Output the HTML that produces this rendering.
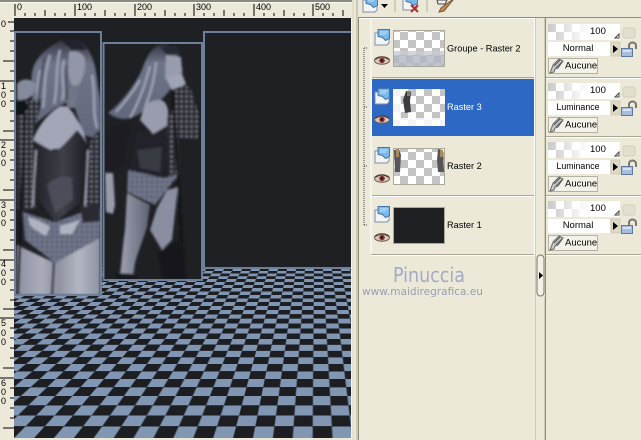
<!DOCTYPE html>
<html><head><meta charset="utf-8">
<style>
html,body{margin:0;padding:0;background:#ece9d8;}
#root{position:relative;width:641px;height:440px;overflow:hidden;background:#ece9d8;font-family:"Liberation Sans",sans-serif;}
#canvas{position:absolute;left:14px;top:18px;width:337px;height:419px;background:#1e2024;}
#floor{position:absolute;left:14px;top:268px;width:337px;height:170px;overflow:hidden;background:#1e2024;perspective:1000px;perspective-origin:301px -138px;}
#plane{position:absolute;left:-1199px;top:-1130px;width:3000px;height:1300px;transform-origin:50% 100%;transform:rotateX(90deg);
background-color:#1d1e22;
background-image:conic-gradient(#8096b3 25%,#1d1e22 25% 50%,#8096b3 50% 75%,#1d1e22 75%);
background-size:39.8px 79px;background-position:5.25px 100%;}
svg#ov{position:absolute;left:0;top:0;}
svg text{font-family:"Liberation Sans",sans-serif;fill:#000;}
</style></head><body><div id="root">
<div id="canvas"></div>
<div id="floor"><div id="plane"></div></div>
<svg id="ov" width="641" height="440" viewBox="0 0 641 440" xmlns="http://www.w3.org/2000/svg">
<defs>
<filter id="b1" x="-10%" y="-10%" width="120%" height="120%"><feGaussianBlur stdDeviation="1.1"/></filter>
<filter id="b3"><feGaussianBlur stdDeviation="0.35"/></filter>
<pattern id="ck" width="16" height="16" patternUnits="userSpaceOnUse"><rect width="16" height="16" fill="#fff"/><rect width="8" height="8" fill="#c3c3c3"/><rect x="8" y="8" width="8" height="8" fill="#c3c3c3"/></pattern>
<pattern id="ck2" width="14" height="14" patternUnits="userSpaceOnUse"><rect width="14" height="14" fill="#fff"/><rect width="7" height="7" fill="#c6c6c6"/><rect x="7" y="7" width="7" height="7" fill="#c6c6c6"/></pattern>
<pattern id="stud" width="5" height="5" patternUnits="userSpaceOnUse"><rect width="5" height="5" fill="#2a2c33"/><circle cx="1.500" cy="1.500" r="1" fill="#9498a8"/></pattern>
<pattern id="stud2" width="5" height="5" patternUnits="userSpaceOnUse"><rect width="5" height="5" fill="#6f7589"/><circle cx="2" cy="2" r="0.9" fill="#2a2c34"/></pattern>
<linearGradient id="fade" x1="0" x2="1"><stop offset="0" stop-color="#fff" stop-opacity="0"/><stop offset=".55" stop-color="#fff" stop-opacity=".85"/><stop offset=".75" stop-color="#fff"/></linearGradient>
<linearGradient id="hair" x1="0" y1="0" x2="0" y2="1"><stop offset="0" stop-color="#32353f"/><stop offset=".25" stop-color="#6f7489"/><stop offset="1" stop-color="#62677b"/></linearGradient>
<linearGradient id="thigh" x1="0" x2="1"><stop offset="0" stop-color="#8d90a0"/><stop offset=".3" stop-color="#a9acba"/><stop offset=".5" stop-color="#8f92a2"/><stop offset=".75" stop-color="#b3b6c3"/><stop offset="1" stop-color="#8f92a2"/></linearGradient>
<linearGradient id="leg2" x1="0" x2="1"><stop offset="0" stop-color="#9da1b1"/><stop offset="1" stop-color="#5d6272"/></linearGradient>
<linearGradient id="corset" x1="0" x2="1"><stop offset="0" stop-color="#1f2126"/><stop offset=".55" stop-color="#3e4049"/><stop offset="1" stop-color="#1c1e23"/></linearGradient>
<clipPath id="c1"><rect x="16" y="33" width="84" height="261"/></clipPath>
<clipPath id="c2"><rect x="105" y="44" width="96" height="235"/></clipPath>
<g id="lay"><path d="M1 4h12l2-4v14l-2 2H1z" fill="#f4f4f4" stroke="#7b8ea6"/><path d="M4 0.500h11.500v9l-4 2-3-3-4.500-1z" fill="#79b8e8" stroke="#3f78ac"/><path d="M6 3h8M6 5h6" stroke="#c4e2f8"/></g>
<g id="eye"><ellipse cx="8" cy="4.500" rx="7.500" ry="3.800" fill="#d8c8bc" stroke="#6b5a52"/><circle cx="8" cy="4.500" r="2.800" fill="#8a3a30"/><circle cx="8" cy="4.500" r="1.200" fill="#1d1010"/><path d="M1 3.500Q8-1.500 15 3.500" fill="none" stroke="#4a3a34" stroke-width="1.200"/></g>
<g id="lock"><path d="M8 7V3.500a3.500 3 0 0 1 7 0V7" fill="none" stroke="#77776f" stroke-width="2"/><rect x="0.500" y="6.500" width="11" height="8" fill="#a8bcdc" stroke="#5e78a4"/><rect x="2" y="8" width="8" height="2" fill="#d7e2f2"/></g>
<g id="brush"><path d="M0 14 3 6 9 0l4 2-5 7-3 1-1 3z" fill="#c8c8c8" stroke="#666"/><path d="M4 7 10 1M6 9 12 3" stroke="#555" fill="none"/></g>
<g id="ctl">
<rect x="0" y="0" width="72" height="16" fill="#fff"/><rect x="0" y="0" width="40" height="16" fill="url(#ck)" opacity=".9"/><rect x="0" y="0" width="60" height="16" fill="url(#fade)"/>
<path d="M67 14l4-4v4z" fill="none" stroke="#444"/>
<rect x="75" y="4" width="12" height="10" rx="2" fill="#e2dfcf" stroke="#d2cfc0"/>
<rect x="0" y="18" width="62" height="14" fill="#fff"/><rect x="63" y="18" width="9" height="14" fill="#ded9c5" stroke="#bdb9a6" stroke-width=".5"/><path d="M65 21l5 4-5 4z" fill="#000"/>
<use href="#lock" x="73" y="18"/>
<rect x="0.500" y="34.500" width="49" height="15" fill="#f4f2e8" stroke="#b5b2a2"/><use href="#brush" x="2" y="35"/>
</g>
</defs>

<!-- frames -->
<rect x="15" y="32" width="86" height="263" fill="#1e2024"/>
<rect x="103.500" y="43" width="98.500" height="237" fill="#1e2024"/>

<!-- left woman -->
<g clip-path="url(#c1)"><g filter="url(#b1)">
<path d="M17 245 55 263 100 237V295H16z" fill="url(#thigh)"/>
<path d="M54 262 52 295" stroke="#4a4d5b" stroke-width="3"/>
<path d="M63 40C75 37 86 44 90 53C96 65 97 78 98 87C101 100 101 110 101 125L101 140L84 135L72 100L55 108L37 122C33 110 30 90 32 73C34 60 44 48 63 40Z" fill="url(#hair)"/>
<path d="M60 40C70 37 82 41 87 50L72 50Z" fill="#22242b"/>
<path d="M69 52C76 50 84 53 85 60C86 72 82 82 76 88C72 88 69 80 68 70Z" fill="#9296a7"/>
<path d="M70 86 79 85 75 108 66 108Z" fill="#6f7488"/>
<path d="M57 108C63 104 70 106 76 118C80 124 84 130 87 145L50 150L33 140C37 128 47 115 57 108Z" fill="#a2a6b6"/>
<path d="M50 55C44 75 45 90 43 108M60 50C55 70 58 90 54 104M40 70C37 85 37 95 38 112M92 75C96 95 92 110 97 128M64 60C60 75 66 90 62 100" stroke="#9ca1b3" stroke-width="2.500" fill="none"/>
<path d="M45 58C40 75 40 90 38 100M67 65C65 80 67 90 67 100" stroke="#474a59" stroke-width="2" fill="none"/>
<path d="M32 140C40 145 48 148 54 152C62 148 70 138 77 130C82 135 86 140 88 147C85 165 81 185 80 203L55 222L37 197C38 178 36 160 32 140Z" fill="url(#corset)"/>
<path d="M47 185C55 177 66 175 72 178L73 200L55 213Z" fill="#4b4e59"/>
<path d="M17 103 43 99 33 135 35 170 36 210 17 210z" fill="url(#stud)"/>
<path d="M88 147 97 130 101 132 101 210 82 210z" fill="url(#stud)"/>
<path d="M36 150 33 206M88 150 85 206" stroke="#a8acbc" stroke-width="1.500"/>
<path d="M23 212 55 222 80 213 101 210 100 238 55 263 25 240z" fill="url(#stud2)"/>
<path d="M28 217C36 219 46 224 50 227L46 236C38 232 32 228 30 225ZM60 226 80 220 72 234 60 234Z" fill="#b0b4c2"/>
<path d="M80 208 100 203 100 221 83 223z" fill="#2a2c33"/>
<path d="M17 84C22 78 30 78 36 84C36 92 32 97 25 100L17 100Z" fill="#858a9c"/>
<path d="M16 102 25 99 28 108 24 115 16 115z" fill="#111216"/>
<path d="M25 115 18 295" stroke="#15161a" stroke-width="2.500"/>
</g></g>

<!-- right woman -->
<g clip-path="url(#c2)"><g filter="url(#b1)">
<path d="M127 193 150 205 147 227C143 240 138 252 135 263L133 277 120 275C122 258 123 243 125 230Z" fill="url(#leg2)"/>
<path d="M167 190 178 187 172 240 162 250 150 230 157 208Z" fill="#8a8ea0"/>
<path d="M158 252 180 240 183 278 163 278z" fill="#15161b"/>
<path d="M117 273 133 274 138 279H116z" fill="#15161b"/>
<path d="M105 173 113 173 115 205 113 214 106 212z" fill="#979bac"/>
<path d="M113 127 130 125 122 163 105 172C105 155 108 138 113 127Z" fill="#1a1c22"/>
<path d="M158 45C170 42 180 50 183 73L172 87C165 97 157 105 147 107C138 118 122 124 108 113C122 102 134 86 142 70C146 58 150 50 158 45Z" fill="url(#hair)"/>
<path d="M160 46 176 46 181 54 166 55z" fill="#282a32"/>
<path d="M166 55 181 57 182 70 174 87 165 78z" fill="#989cad"/>
<path d="M140 80C133 92 125 102 116 112M150 66C145 85 140 100 130 118M156 62C155 78 150 95 146 104" stroke="#a3a9ba" stroke-width="2" fill="none"/>
<path d="M145 104C155 100 165 95 168 110L168 128L153 134L140 120Z" fill="#989cac"/>
<path d="M137 130 153 134 168 125 170 140 163 178 130 170z" fill="#212329"/>
<path d="M137 150 162 147 160 172 140 168z" fill="#383a43"/>
<path d="M175 83 190 87 200 117 198 140 177 137z" fill="url(#stud)"/>
<path d="M167 118 177 105 180 172 168 176z" fill="url(#stud)"/>
<path d="M166 78 182 74 186 84 172 90z" fill="#a0a4b4"/>
<path d="M128 170 163 178 180 173 155 205 127 192z" fill="url(#stud2)"/>
<path d="M173 90 184 279" stroke="#121317" stroke-width="2.500"/>
</g></g>

<g fill="none" stroke="#6e8099" stroke-width="2">
<rect x="15" y="32" width="86" height="263"/>
<rect x="103.500" y="43" width="98.500" height="237"/>
<path d="M204 268V32H351M204 268H351"/>
</g>

<!-- top ruler -->
<rect x="0" y="0" width="352" height="2" fill="#8a8a80"/>
<rect x="0" y="2" width="352" height="1" fill="#fbfaf2"/>
<rect x="351" y="18" width="2" height="420" fill="#f8f6ec"/>
<path d="M357 0V440" stroke="#a9a692"/>
<path d="M353 0V440" stroke="#d5d1bb"/>
<g stroke="#000" stroke-width="1">
<path d="M15 4V16M25 13V16M35 13V16M45 10V16M55 13V16M65 13V16M75 4V16M85 13V16M95 13V16M105 10V16M115 13V16M125 13V16M135 4V16M145 13V16M155 13V16M165 10V16M175 13V16M185 13V16M194 4V16M204 13V16M214 13V16M224 10V16M234 13V16M244 13V16M254 4V16M264 13V16M274 13V16M284 10V16M294 13V16M304 13V16M313 4V16M323 13V16M333 13V16M343 10V16"/>
<path d="M8 22H14M10 31H14M10 41H14M10 51H14M3 61H14M10 71H14M0 81H14M10 91H14M10 101H14M10 111H14M10 121H14M3 131H14M0 140H14M10 150H14M10 160H14M10 170H14M10 180H14M3 190H14M0 200H14M10 210H14M10 220H14M10 230H14M10 240H14M3 250H14M0 260H14M10 270H14M10 280H14M10 290H14M10 300H14M3 309H14M0 318H14M10 328H14M10 338H14M10 348H14M10 358H14M3 368H14M0 378H14M10 388H14M10 398H14M10 408H14M10 418H14M3 428H14"/>
</g>
<g font-size="9" >
<text x="17" y="10">0</text><text x="77" y="10">100</text><text x="137" y="10">200</text><text x="196" y="10">300</text><text x="256" y="10">400</text><text x="315" y="10">500</text>
<text x="1" y="27">0</text>
<text x="1" y="89">1</text><text x="1" y="98">0</text><text x="1" y="107">0</text>
<text x="1" y="148">2</text><text x="1" y="157">0</text><text x="1" y="166">0</text>
<text x="1" y="208">3</text><text x="1" y="217">0</text><text x="1" y="226">0</text>
<text x="1" y="267">4</text><text x="1" y="276">0</text><text x="1" y="285">0</text>
<text x="1" y="326">5</text><text x="1" y="336">0</text><text x="1" y="345">0</text>
<text x="1" y="386">6</text><text x="1" y="395">0</text><text x="1" y="404">0</text>
</g>

<!-- layer toolbar -->
<path d="M358 17.500H641" stroke="#8f8c78"/>
<path d="M358 18.500H535" stroke="#fff"/>
<path d="M358.500 18V440" stroke="#8f8c78"/>
<use href="#lay" x="362" y="-4"/>
<path d="M381 4h7l-3.500 4z" fill="#000"/>
<path d="M395 0V12M427 0V12" stroke="#b5b2a0"/>
<use href="#lay" x="402" y="-6"/>
<path d="M411 5l7 7M418 5l-7 7" stroke="#c22" stroke-width="2"/>
<path d="M437 0h10l-2 4h-7z" fill="#eee" stroke="#444"/>
<path d="M452 0 441 8l-2 4 5-1 9-11z" fill="#c08a50" stroke="#7a5a3c"/>

<!-- tree line -->
<path d="M364 48V226M364 107H368M364 166H368M364 225H368M364 48H367" stroke="#444" stroke-dasharray="1 1" fill="none"/>

<!-- rows -->
<rect x="372" y="79" width="162" height="57" fill="#2e68c5"/>
<path d="M372 77.500H534M372 195.500H534M371 254.500H534" stroke="#aca899"/>
<path d="M372 196.500H534M371 255.500H534" stroke="#fff"/>
<path d="M371 19V254" stroke="#fff"/>
<path d="M534.500 18V254" stroke="#fff"/>
<path d="M535.500 18V440M544.500 18V255M544.500 297V440" stroke="#cfccb8"/>

<use href="#lay" x="374" y="29"/><use href="#eye" x="374" y="56"/>
<use href="#lay" x="374" y="88"/><use href="#eye" x="374" y="115"/>
<use href="#lay" x="374" y="147"/><use href="#eye" x="374" y="174"/>
<use href="#lay" x="374" y="206"/><use href="#eye" x="374" y="233"/>

<g>
<rect x="393.500" y="30.500" width="51" height="36" fill="url(#ck)" stroke="#aaa89a"/>
<rect x="394" y="51" width="50" height="5" fill="#c7cad3" opacity=".8"/>
<rect x="394" y="55" width="50" height="11" fill="#b1b6c4"/>
<rect x="394" y="55" width="50" height="11" fill="url(#ck2)" opacity=".2"/>
<rect x="393" y="89" width="52" height="37" fill="url(#ck)"/>
<path d="M393 89h8v37h-8zM393 118h52v8h-52z" fill="#fff" opacity=".8"/>
<path d="M406 91 411 92 410 101 411 112 405 113 403 100z" fill="#3a3c42" filter="url(#b3)"/>
<path d="M407 91h3v5h-3z" fill="#8d7a5e"/>
<rect x="393.500" y="148.500" width="51" height="36" fill="url(#ck)" stroke="#aaa89a"/>
<path d="M394 150 399 149 401 155 400 172 395 172zM438 149 443 150 444 172 438 172 437 160z" fill="#54575a" filter="url(#b3)"/>
<path d="M396 150h3v7h-3zM440 150h3v7h-3z" fill="#a98a5c"/>
<rect x="393.500" y="207.500" width="51" height="36" fill="#1f2024" stroke="#aaa89a"/>
</g>

<g font-size="9.200">
<text x="447" y="51.500">Groupe - Raster 2</text>
<text x="447" y="110" style="fill:#fff">Raster 3</text>
<text x="447" y="169">Raster 2</text>
<text x="447" y="228">Raster 1</text>
</g>

<!-- slider -->
<rect x="537" y="255" width="7" height="41" rx="3.500" fill="#f3f1e6" stroke="#77756a"/>
<path d="M539 272l4 3.500-4 3.500z" fill="#000"/>

<!-- watermark -->
<text x="393" y="282" font-size="20" textLength="72" lengthAdjust="spacingAndGlyphs" style="font-family:'DejaVu Sans',sans-serif;fill:#a5a9c6" filter="url(#b3)">Pinuccia</text>
<text x="362" y="295" font-size="10.500" textLength="121" lengthAdjust="spacingAndGlyphs" style="font-family:'DejaVu Sans',sans-serif;fill:#9a9cb4" filter="url(#b3)">www.maidiregrafica.eu</text>

<!-- right controls -->
<path d="M545.500 18V440" stroke="#8f8c78"/>
<path d="M546 77.500H641M546 136.500H641M546 195.500H641M546 254.500H641" stroke="#aca899"/>
<path d="M546 78.500H641M546 137.500H641M546 196.500H641M546 255.500H641" stroke="#fff"/>
<use href="#ctl" x="548" y="24"/><use href="#ctl" x="548" y="83"/><use href="#ctl" x="548" y="142"/><use href="#ctl" x="548" y="201"/>
<g font-size="9.500">
<text x="590" y="34">100</text><text x="590" y="93">100</text><text x="590" y="152">100</text><text x="590" y="211">100</text>
<text x="578" y="51" text-anchor="middle">Normal</text>
<text x="578" y="110" text-anchor="middle" font-size="8.800">Luminance</text>
<text x="578" y="169" text-anchor="middle" font-size="8.800">Luminance</text>
<text x="578" y="228" text-anchor="middle">Normal</text>
<text x="565" y="68.500">Aucune</text><text x="565" y="127.500">Aucune</text><text x="565" y="186.500">Aucune</text><text x="565" y="245.500">Aucune</text>
</g>
</svg>
</div></body></html>
